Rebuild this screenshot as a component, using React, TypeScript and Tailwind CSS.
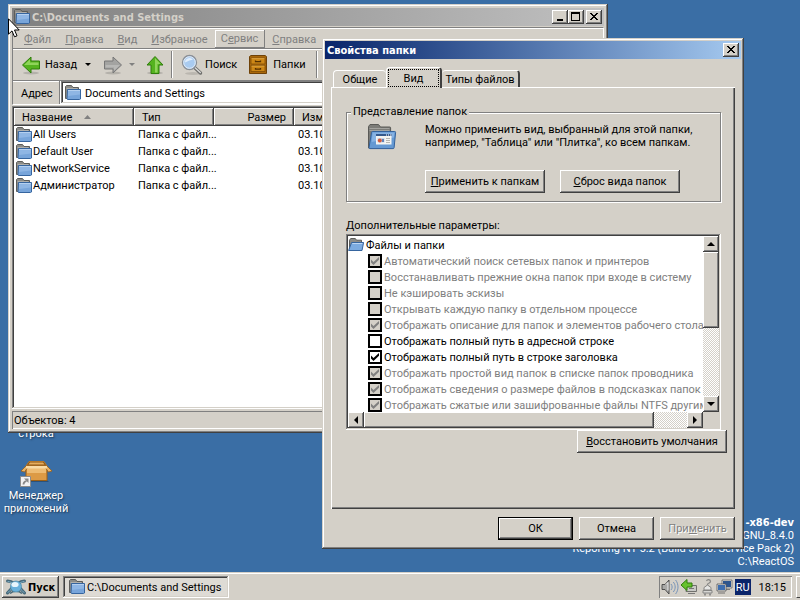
import { useState } from 'react'
import type { ReactNode } from 'react'

const raised = 'bg-[#d4d0c8] shadow-[inset_-1px_-1px_#404040,inset_1px_1px_#fff,inset_-2px_-2px_#808080]'
const sunken = 'p-0.5 shadow-[inset_-1px_-1px_#fff,inset_1px_1px_#808080,inset_-2px_-2px_#d4d0c8,inset_2px_2px_#404040]'
const frame = 'bg-[#d4d0c8] shadow-[inset_-1px_-1px_#404040,inset_1px_1px_#d4d0c8,inset_-2px_-2px_#808080,inset_2px_2px_#fff]'
const thin = 'shadow-[inset_1px_1px_#808080,inset_-1px_-1px_#fff]'
const dither = 'bg-[repeating-conic-gradient(#fff_0_25%,#d4d0c8_0_50%)] bg-[length:2px_2px]'
const strong = "font-['DejaVu_Sans_Condensed','DejaVu_Sans',sans-serif] font-bold"

const menu = [
  { key: 'Ф', rest: 'айл' },
  { key: 'П', rest: 'равка' },
  { key: 'В', rest: 'ид' },
  { key: 'И', rest: 'збранное' },
  { pre: 'С', key: 'е', rest: 'рвис', raised: true },
  { key: 'С', rest: 'правка' },
]

const files = ['All Users', 'Default User', 'NetworkService', 'Администратор']

const options = [
  { text: 'Автоматический поиск сетевых папок и принтеров', on: true, disabled: true },
  { text: 'Восстанавливать прежние окна папок при входе в систему', on: false, disabled: true },
  { text: 'Не кэшировать эскизы', on: false, disabled: true },
  { text: 'Открывать каждую папку в отдельном процессе', on: false, disabled: true },
  { text: 'Отображать описание для папок и элементов рабочего стола', on: true, disabled: true },
  { text: 'Отображать полный путь в адресной строке', on: false, disabled: false },
  { text: 'Отображать полный путь в строке заголовка', on: true, disabled: false },
  { text: 'Отображать простой вид папок в списке папок проводника', on: true, disabled: true },
  { text: 'Отображать сведения о размере файлов в подсказках папок', on: true, disabled: true },
  { text: 'Отображать сжатые или зашифрованные файлы NTFS другим', on: true, disabled: true },
]

function Folder() {
  return (
    <svg className="shrink-0" width="16" height="16" viewBox="0 0 16 16">
      <path d="M.5 13.500V1.500l1-1h5l1.500 2h5.500v11z" fill="#8c8c88" stroke="#5d5d5a" />
      <path d="M1.500 3.500h11" stroke="#b0b0ac" />
      <path d="M2.500 4.500h13v9.500l-1 .5h-12l-.5-1z" fill="#78a5da" stroke="#36659f" />
      <path d="M3 5h12v4.500L3 11z" fill="#8fb6e4" />
      <path d="M3 5.500h12" stroke="#b5d0ef" />
    </svg>
  )
}

function OpenFolder() {
  return (
    <svg className="shrink-0" width="16" height="16" viewBox="0 0 16 16">
      <path d="M1.500 13.500V3.200L2.700 1.500h4.600l1.200 1.700h5v10.300z" fill="#8c8c88" stroke="#5d5d5a" />
      <path d="M3.600 5.500h12L14 13.500H.6z" fill="#7cabe0" stroke="#36659f" />
      <path d="M4.300 6.500h10" stroke="#bdd6f3" />
    </svg>
  )
}

function ViewFolder() {
  return (
    <svg width="30" height="28" viewBox="0 0 30 28">
      <path d="M1.500 25V3.500L3 1.500h8.500L13.500 4h9.300a.8.8 0 0 1 .8.8V25z" fill="#7c7c78" stroke="#5a5a57" />
      <path d="M2.500 5.500h20M2.500 7.500h20" stroke="#a3a39f" />
      <path d="M5.500 8.500h22.200a.9.9 0 0 1 .9 1l-1.500 15.200a1 1 0 0 1-1 .9H3a1 1 0 0 1-1-1L4.600 9.300a1 1 0 0 1 .9-.8z" fill="#6599d3" stroke="#34629c" />
      <path d="M5.600 9.500h21.800l-.5 5L4.600 19z" fill="#86b2e3" />
      <path d="M9 11h15.500v10.500H9z" fill="#f4f4f2" />
      <path d="M9 11h15.500v2H9z" fill="#35598c" />
      <path d="M19 12h1M21 12h1M23 12h1" stroke="#fff" />
      <path d="M10.500 15h7v4.500h-7z" fill="#c9d5e6" />
      <circle cx="12.800" cy="17.500" r="2" fill="#d45a3c" />
      <path d="M15 16h2v3h-2z" fill="#5f83b8" />
      <path d="M19 15.500h4M19 17.500h4M19 19.500h4" stroke="#b5b5b2" />
    </svg>
  )
}

function Arrow({ dir }: { dir: 'left' | 'right' | 'up' }) {
  const gray = dir === 'right'
  const turn = { left: '', right: 'rotate(180 10 10)', up: 'rotate(90 10 10)' }[dir]
  return (
    <svg width="20" height="20" viewBox="0 0 20 20">
      <ellipse cx="10" cy="18" rx="8" ry="1.500" fill="#000" opacity=".15" />
      <g transform={turn}>
        <path d="M1.500 10L10 2v4h8.500v8H10v4z" fill={gray ? '#a3a3a1' : '#55b31f'} stroke={gray ? '#777' : '#2f7d0b'} strokeLinejoin="round" />
        <path d="M3 10L9 4.300v3.200h8.500V10z" fill={gray ? '#b8b8b6' : '#8fd45a'} />
      </g>
    </svg>
  )
}

function Caret({ className }: { className: string }) {
  return (
    <svg className={className} width="6" height="3" viewBox="0 0 6 3" fill="currentColor">
      <path d="M0 0h6L3 3z" />
    </svg>
  )
}

function Search() {
  return (
    <svg width="22" height="22" viewBox="0 0 22 22">
      <ellipse cx="12" cy="19.500" rx="8" ry="1.500" fill="#000" opacity=".12" />
      <path d="M13 13l6.500 6" stroke="#6d6d6b" strokeWidth="3.400" strokeLinecap="round" />
      <path d="M13.500 13.300l5.800 5.300" stroke="#d9d9d7" strokeWidth="1.400" strokeLinecap="round" />
      <circle cx="8.500" cy="8.500" r="7" fill="#a9cbf0" stroke="#8a8f96" strokeWidth="1.300" />
      <circle cx="8.500" cy="8.500" r="5.800" fill="none" stroke="#e4edf7" />
      <path d="M4 8.500a4.500 4.500 0 0 1 8-2.800c-2 .4-5 1-8 2.800z" fill="#e0eefc" />
    </svg>
  )
}

function Cabinet() {
  return (
    <svg width="18" height="20" viewBox="0 0 18 20">
      <path d="M.5 1.500L2 .5h14l1.500 1v17h-17z" fill="#a9670a" stroke="#6f4208" />
      <path d="M2 3h14v6H2zM2 10.500h14v6H2z" fill="#cd8716" stroke="#7d4c06" strokeWidth=".8" />
      <path d="M2.500 3.600h13M2.500 11.100h13" stroke="#e5ab48" strokeWidth=".8" />
      <path d="M6.500 5.500v1.200h5V5.500M6.500 13v1.200h5V13" fill="none" stroke="#553000" strokeWidth="1.300" />
    </svg>
  )
}

function PackageBox() {
  return (
    <svg width="34" height="32" viewBox="0 0 34 32">
      <path d="M7 23h21l2 2H9z" fill="#000" opacity=".25" />
      <path d="M7 9h21v14.500H7z" fill="#dc9a45" stroke="#9a5f17" />
      <path d="M8 10h19v6H8z" fill="#edbb72" />
      <path d="M7 9l3-4.500h15L28 9z" fill="#8d5717" stroke="#b4772a" />
      <path d="M11 5.500h13l1.500 2h-16z" fill="#e5ad5f" />
      <path d="M7 9l-5 5 3.500 1L9 10zM28 9l5 5-3.500 1L26 10z" fill="#e9b468" stroke="#9a5f17" strokeWidth=".8" />
      <path d="M7 9h21v2.500H7z" fill="#f9dba6" />
      <path d="M1.500 19.500h10v10h-10z" fill="#f2f2f2" stroke="#8c8c8c" />
      <path d="M4.500 27.500c0-2.500 1-3 3-3.500" fill="none" stroke="#888" strokeWidth="1.800" />
      <path d="M5 21.500h4.500V26z" fill="#888" />
    </svg>
  )
}

function StartLogo() {
  return (
    <svg width="20" height="18" viewBox="0 0 20 18">
      <path d="M1.500 3c5 0 12 6 17 12M18.500 3C13.500 3 6.500 9 1.500 15" fill="none" stroke="#47697a" strokeWidth="3" strokeLinecap="round" />
      <path d="M2 3.500c5 .5 11 5.500 16 11M18 3.500c-5 .5-11 5.500-16 11" fill="none" stroke="#7fb0c6" strokeLinecap="round" />
      <path d="M4 15.500c3-3 9-3 12 0" fill="none" stroke="#47697a" strokeWidth="1.600" />
      <circle cx="10" cy="8.500" r="5.500" fill="#69b1dc" stroke="#4a88a5" strokeWidth=".7" />
      <ellipse cx="9" cy="6.500" rx="3.600" ry="2.600" fill="#e6f5fd" />
    </svg>
  )
}

function Cursor() {
  return (
    <svg className="absolute left-2 top-[18px] z-30" width="12" height="20" viewBox="0 0 12 20">
      <path d="M.5.8v15.400l3.500-3.300 2.500 5.900 2.500-1-2.500-5.800h4.700z" fill="#fff" stroke="#000" />
    </svg>
  )
}

function CaptionButton({ label, children }: { label: string; children: ReactNode }) {
  return (
    <button aria-label={label} className={`flex h-3.5 w-4 items-center justify-center ${raised}`}>
      <svg width="10" height="10" viewBox="0 0 10 10" fill="none" stroke="#000" shapeRendering="crispEdges">{children}</svg>
    </button>
  )
}

const closeGlyph = <path d="M1 1h2v1h1v1h2V2h1V1h2v1H8v1H7v1H6v1h1v1h1v1h1v1H7V7H6V6H4v1H3v1H1V7h1V6h1V5h1V4H3V3H2V2H1z" fill="#000" stroke="none" />

function Grip({ className }: { className?: string }) {
  return <div className={`w-0.5 self-stretch border-l border-[#808080] border-r border-r-white ${className ?? ''}`} />
}

function Explorer() {
  return (
    <section className={`absolute left-2 top-1 w-[600px] p-1 ${frame}`}>
      <header className={`flex h-[18px] items-center bg-linear-to-r from-[#808080] to-[#c0c0c0] px-0.5 text-[#d4d0c8] ${strong}`}>
        <Folder />
        <h1 className="grow pl-0.5">C:\Documents and Settings</h1>
        <div className="flex">
          <CaptionButton label="Свернуть"><path d="M2 8h6" strokeWidth="2" /></CaptionButton>
          <CaptionButton label="Развернуть"><path d="M.5.5h8v8h-8zM0 1.500h9" /></CaptionButton>
        </div>
        <div className="pl-0.5">
          <CaptionButton label="Закрыть">{closeGlyph}</CaptionButton>
        </div>
      </header>

      <div className="mt-px border border-[#808080] border-b-white border-r-white">
        <nav className="flex h-5 border-t border-white pl-1 pt-px text-[#808080]">
          {menu.map((m, i) => (
            <button key={i} className={m.raised ? 'border-r border-b border-[#808080] px-1.5 shadow-[inset_1px_1px_#fff]' : 'px-[7px]'}>
              {m.pre}<u>{m.key}</u>{m.rest}
            </button>
          ))}
        </nav>
        <div className="flex h-8 items-center border-t border-[#808080] pl-2 shadow-[inset_0_1px_#fff]">
          <button className="flex items-center gap-1"><Arrow dir="left" />Назад</button>
          <Caret className="ml-2 mr-3" />
          <button aria-label="Вперёд"><Arrow dir="right" /></button>
          <Caret className="ml-1.5 mr-2.5 text-[#808080]" />
          <button aria-label="Вверх"><Arrow dir="up" /></button>
          <Grip className="my-0.5 ml-1.5 mr-2" />
          <button className="flex items-center gap-0.5"><Search />Поиск</button>
          <button className="ml-3 flex items-center gap-1.5"><Cabinet />Папки</button>
          <Grip className="my-0.5 ml-2.5" />
        </div>
        <div className="flex h-6 items-stretch border-t border-[#808080] shadow-[inset_0_1px_#fff]">
          <label htmlFor="address" className="w-[46px] self-center pl-2 pt-0.5">Адрес</label>
          <Grip />
          <div className={`flex grow items-center bg-white ${sunken}`}>
            <span className="ml-0.5"><Folder /></span>
            <input id="address" defaultValue="Documents and Settings" className="min-w-0 grow pl-1 pt-0.5 outline-none" />
          </div>
        </div>
      </div>

      <div className={`mt-px h-[303px] overflow-hidden bg-white ${sunken}`}>
        <table className="w-full table-fixed border-collapse text-left">
          <thead>
            <tr className="h-[18px]">
              <th className={`w-[120px] px-2 font-normal ${raised}`}>
                <span className="flex items-center gap-3">
                  Название
                  <svg width="7" height="4" viewBox="0 0 7 4"><path d="M3.500 0L7 4H0z" fill="#808080" /></svg>
                </span>
              </th>
              <th className={`w-20 px-2 font-normal ${raised}`}>Тип</th>
              <th className={`w-20 px-2 text-right font-normal ${raised}`}>Размер</th>
              <th className={`px-2 font-normal ${raised}`}>Изменён</th>
            </tr>
          </thead>
          <tbody>
            {files.map(name => (
              <tr key={name} className="h-[17px]">
                <td className="p-0"><span className="flex h-[17px] items-center gap-px pl-0.5"><Folder />{name}</span></td>
                <td className="whitespace-nowrap py-0 pl-1">Папка с файл...</td>
                <td />
                <td className="py-0 pl-1">03.10</td>
              </tr>
            ))}
          </tbody>
        </table>
      </div>
      <footer className={`mt-0.5 flex h-[18px] items-center px-0.5 ${thin}`}>Объектов: 4</footer>
    </section>
  )
}

function PushButton({ className, children, disabled }: { className: string; children: ReactNode; disabled?: boolean }) {
  return (
    <button disabled={disabled} className={`h-[23px] whitespace-nowrap ${raised} disabled:text-[#808080] disabled:text-shadow-[1px_1px_0_#fff] ${className}`}>
      {children}
    </button>
  )
}

function ScrollButton({ label, d }: { label: string; d: string }) {
  return (
    <button aria-label={label} className={`flex size-4 shrink-0 items-center justify-center ${raised}`}>
      <svg width="8" height="8" viewBox="0 0 8 8"><path d={d} /></svg>
    </button>
  )
}

function Option({ text, on, disabled }: { text: string; on: boolean; disabled: boolean }) {
  const [checked, setChecked] = useState(on)
  return (
    <label className={`flex h-4 items-center gap-0.5 pl-5 ${disabled ? 'text-[#808080]' : 'text-black'}`}>
      <span className="grid shrink-0 place-items-center">
        <input
          type="checkbox"
          checked={checked}
          disabled={disabled}
          onChange={e => setChecked(e.target.checked)}
          className="col-start-1 row-start-1 size-3.5 appearance-none border-2 border-black bg-white disabled:bg-[#d4d0c8]"
        />
        {checked && (
          <svg className="pointer-events-none col-start-1 row-start-1" width="8" height="8" viewBox="0 0 8 8" fill="currentColor">
            <path d="M0 2.500v3L2.500 8 8 2.800V0L2.500 5z" />
          </svg>
        )}
      </span>
      {text}
    </label>
  )
}

function FolderOptions() {
  return (
    <section role="dialog" aria-label="Свойства папки" className={`absolute left-[322px] top-[38px] z-10 w-[422px] p-[3px] ${frame}`}>
      <header className={`flex h-[18px] items-center justify-between bg-linear-to-r from-[#0a246a] to-[#a6caf0] px-0.5 text-white ${strong}`}>
        <h2>Свойства папки</h2>
        <CaptionButton label="Закрыть">{closeGlyph}</CaptionButton>
      </header>

      <div className="px-1.5 pb-1.5 pt-2">
        <div role="tablist" className="flex items-end pl-0.5">
          <button role="tab" className="h-[17px] w-[53px] rounded-t-sm border-l border-t border-white">Общие</button>
          <button role="tab" aria-selected="true" className="relative z-10 -mb-px h-[21px] w-14 rounded-t-sm border-l border-t border-white border-r-2 border-r-[#404040] bg-[#d4d0c8] p-px">
            <span className="flex h-full items-center justify-center border border-dotted border-black">Вид</span>
          </button>
          <button role="tab" className="h-[17px] w-[78px] whitespace-nowrap rounded-t-sm border-t border-white border-r-2 border-r-[#404040]">Типы файлов</button>
        </div>

        <div className="pb-14 pl-[15px] pr-3.5 pt-[18px] shadow-[inset_1px_1px_#fff,inset_-1px_-1px_#404040,inset_-2px_-2px_#808080]">
          <fieldset className="border border-[#808080] px-2 pb-2 shadow-[1px_1px_#fff,inset_1px_1px_#fff]">
            <legend className="-ml-1 bg-[#d4d0c8] px-0.5 leading-[14px]">Представление папок</legend>
            <div className="flex gap-7 pl-3 pt-1">
              <ViewFolder />
              <p className="leading-[13px]">
                Можно применить вид, выбранный для этой папки,<br />
                например, "Таблица" или "Плитка", ко всем папкам.
              </p>
            </div>
            <div className="mt-[19px] flex gap-[15px] pl-[70px]">
              <PushButton className="w-[120px]"><u>П</u>рименить к папкам</PushButton>
              <PushButton className="w-[120px]"><u>С</u>брос вида папок</PushButton>
            </div>
          </fieldset>

          <div className="mb-0.5 mt-[17px]">Дополнительные параметры:</div>
          <div className={`flex flex-col bg-white ${sunken}`}>
            <div className="flex h-44">
              <div className="min-w-0 grow whitespace-nowrap pt-px">
                <div className="flex h-4 items-center gap-0.5"><OpenFolder />Файлы и папки</div>
                {options.map(o => <Option key={o.text} {...o} />)}
              </div>
              <div className={`z-10 flex w-4 shrink-0 flex-col ${dither}`}>
                <ScrollButton label="Вверх" d="M4 2l4 4H0z" />
                <div className={`h-[76px] ${raised}`} />
                <div className="grow" />
                <ScrollButton label="Вниз" d="M0 2h8L4 6z" />
              </div>
            </div>
            <div className="z-10 flex h-4 bg-[#d4d0c8]">
              <div className={`flex grow ${dither}`}>
                <ScrollButton label="Влево" d="M6 0v8L2 4z" />
                <div className={`w-[290px] ${raised}`} />
                <div className="grow" />
                <ScrollButton label="Вправо" d="M2 0v8l4-4z" />
              </div>
              <div className="w-4" />
            </div>
          </div>
          <div className="-mr-1.5 flex justify-end">
            <PushButton className="w-[150px]"><u>В</u>осстановить умолчания</PushButton>
          </div>
        </div>

        <div className="flex justify-end gap-1.5 pt-2">
          <PushButton className="w-[75px] border border-black">ОК</PushButton>
          <PushButton className="w-[75px]">Отмена</PushButton>
          <PushButton className="w-[75px]" disabled>При<u>м</u>енить</PushButton>
        </div>
      </div>
    </section>
  )
}

function Tray() {
  return (
    <div className={`flex h-[22px] items-center px-0.5 ${thin}`}>
      <svg width="18" height="18" viewBox="0 0 18 18">
        <path d="M1 6.500h3l4-4.500v14l-4-4.500H1z" fill="#a9a9a7" stroke="#444" strokeWidth=".9" />
        <path d="M5 6.500l2-2v8" stroke="#eee" fill="none" />
        <path d="M10 6c1.500 2 1.500 4 0 6M12.300 4c2.500 3 2.500 7 0 10M14.600 2c3.200 4 3.200 10 0 14" fill="none" stroke="#7693b8" />
      </svg>
      <svg className="ml-px" width="18" height="18" viewBox="0 0 18 18">
        <path d="M6 7.500h10.500v6H6z" fill="#c9c9c6" stroke="#70706d" />
        <path d="M9 10.500h5M8 15.500h7" stroke="#777" />
        <path d="M1 7l6-5.500V5h5v4H7v3.500z" fill="#67c22d" stroke="#2f7d0b" />
      </svg>
      <svg className="ml-0.5" width="16" height="18" viewBox="0 0 16 18">
        <path d="M7.500 9V6.500c0-1.500 3-1 3-3S7.500 1 6.500 3" fill="none" stroke="#8a8a87" strokeWidth="1.300" />
        <path d="M4 9.500L7.500 7 11 9.500V12H4z" fill="#e6e6e4" stroke="#858583" />
        <path d="M3 12.500h9v2.500H3z" fill="#d6d6d3" stroke="#858583" />
        <path d="M5 15.500v2M10 15.500v2" stroke="#777" strokeWidth="1.400" />
      </svg>
      <svg width="17" height="18" viewBox="0 0 17 18">
        <path d="M6.500 2.500h9v7h-9z" fill="#2d568f" stroke="#e4e4e1" />
        <path d="M6 2h10v8H6zM9 11.500h5" fill="none" stroke="#666" strokeWidth=".8" />
        <path d="M1.500 6.500h8v6h-8z" fill="#3f6faf" stroke="#e4e4e1" />
        <path d="M1 6h9v7H1zM2 15h7" fill="none" stroke="#555" strokeWidth=".8" />
      </svg>
      <span className="ml-0.5 flex size-4 items-center justify-center bg-[#0a246a] text-white">RU</span>
      <time className="pl-2 pr-1">18:15</time>
    </div>
  )
}

export default function App() {
  return (
    <div className="flex h-screen flex-col overflow-hidden bg-[#3a6ea5] font-[Roboto,sans-serif] text-[11px] leading-[13px] text-black">
      <main className="relative flex grow items-end justify-between">
        <ul className="flex w-[72px] flex-col gap-[17px] pb-[57px] text-center text-white text-shadow-[1px_1px_2px_#0008]">
          <li>строка</li>
          <li className="flex flex-col items-center">
            <PackageBox />
            Менеджер приложений
          </li>
        </ul>
        <div className="pb-1 pr-1.5 text-right text-white">
          <div className={strong}>-x86-dev</div>
          <div>GNU_8.4.0</div>
          <div>Reporting NT 5.2 (Build 3790: Service Pack 2)</div>
          <div>C:\ReactOS</div>
        </div>
        <Explorer />
        <FolderOptions />
        <Cursor />
      </main>

      <footer className="flex h-7 shrink-0 items-center gap-1 bg-[#d4d0c8] pl-0.5 pt-0.5 shadow-[inset_0_1px_#d4d0c8,inset_0_2px_#fff]">
        <button className={`flex h-[22px] w-[57px] items-center gap-0.5 pl-1 ${strong} ${raised}`}>
          <StartLogo />Пуск
        </button>
        <button className={`flex h-[22px] w-[166px] items-center gap-0.5 whitespace-nowrap bg-[#dedbd5] ${sunken}`}>
          <span className="pl-1"><Folder /></span>C:\Documents and Settings
        </button>
        <div className="grow" />
        <Tray />
        <div className="h-[22px] w-1 border-l border-t border-white border-b border-b-[#404040]" />
      </footer>
    </div>
  )
}
